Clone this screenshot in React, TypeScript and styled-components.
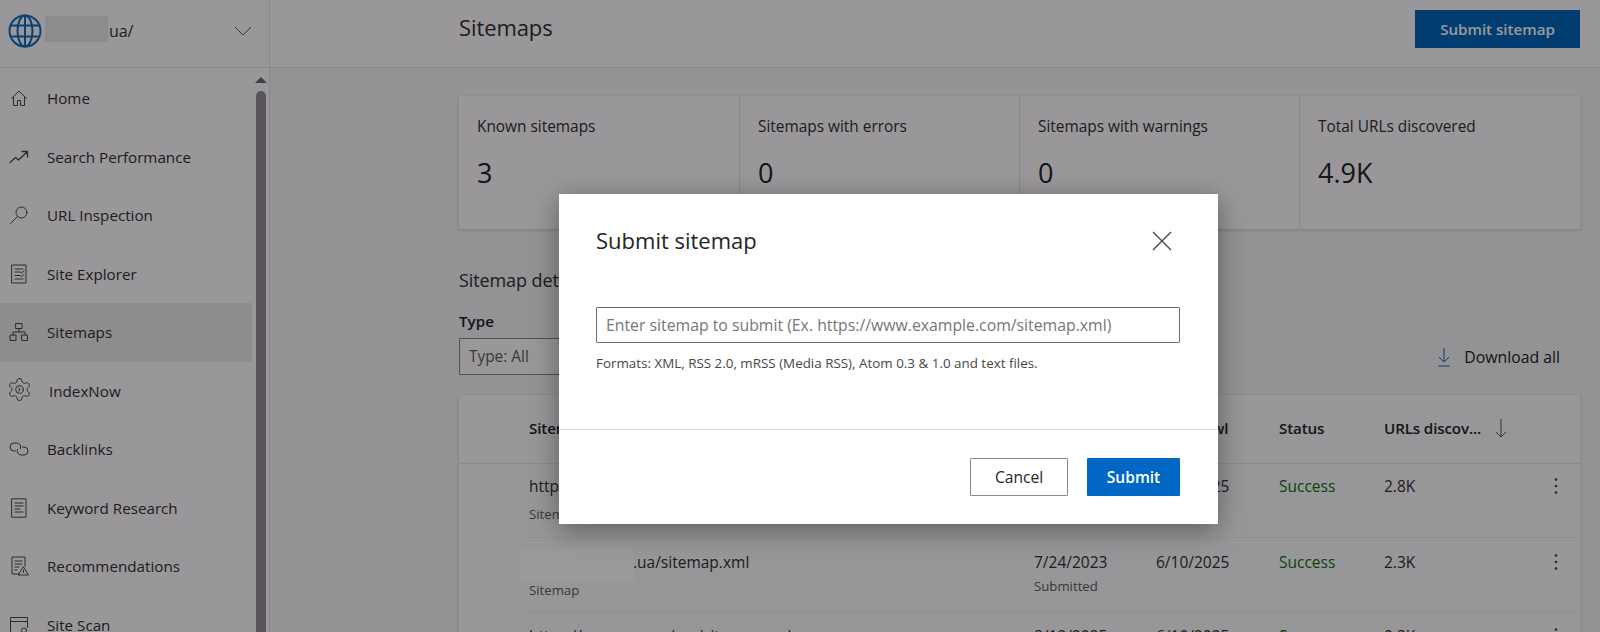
import React from "react";
import styled, { createGlobalStyle } from "styled-components";

const Global = createGlobalStyle`
  html, body { margin: 0; padding: 0; background: #f4f3f4; }
  * { box-sizing: border-box; }
  body { font-family: "Open Sans", "Noto Sans", "Liberation Sans", sans-serif; color: #242424; }
`;

const Shell = styled.div`
  position: relative;
  display: grid;
  grid-template-columns: 270px 1fr;
  width: 1600px;
  height: 632px;
  overflow: hidden;
  background: #f4f3f4;
`;

const Sidebar = styled.aside`
  display: flex;
  flex-direction: column;
  background: #fdfcfd;
  border-right: 1px solid #e4e2e4;
  min-height: 0;
`;

const SiteBar = styled.div`
  display: flex;
  align-items: center;
  height: 68px;
  flex: none;
  padding: 0 17px 6px 8px;
  border-bottom: 1px solid #e4e2e4;
`;

const SiteName = styled.span`
  position: relative;
  flex: 1;
  padding-left: 59px;
  margin-left: 4px;
  font-size: 16px;
  letter-spacing: -0.1px;
  color: #333;
`;

const Redaction = styled.span<{ $w: number; $h: number; $x: number; $y: number }>`
  position: absolute;
  left: ${(p) => p.$x}px;
  top: ${(p) => p.$y}px;
  width: ${(p) => p.$w}px;
  height: ${(p) => p.$h}px;
  background: #e8e8e8;
`;

const NavArea = styled.div`
  flex: 1;
  display: flex;
  min-height: 0;
  overflow: hidden;
`;

const NavList = styled.nav`
  width: 252px;
  flex: none;
  padding-top: 1px;
`;

const NavItem = styled.div<{ $active?: boolean; $indent?: number }>`
  display: flex;
  align-items: center;
  height: 58.5px;
  padding-left: 9px;
  background: ${(p) => (p.$active ? "#ece9e8" : "transparent")};
  font-size: 15.2px;
  color: #323130;

  span {
    margin-left: ${(p) => p.$indent ?? 18}px;
  }
`;

const ScrollTrack = styled.div`
  flex: 1;
  display: flex;
  flex-direction: column;
  align-items: center;
  padding-top: 9px;
`;

const ScrollArrow = styled.div`
  width: 0;
  height: 0;
  border-left: 6px solid transparent;
  border-right: 6px solid transparent;
  border-bottom: 6px solid #6d6b6f;
`;

const ScrollThumb = styled.div`
  width: 10px;
  flex: 1;
  margin-top: 8px;
  margin-bottom: -40px;
  border-radius: 5px 5px 0 0;
  background: #918d93;
`;

const Main = styled.main`
  display: flex;
  flex-direction: column;
  min-width: 0;
`;

const TopBar = styled.header`
  display: flex;
  align-items: center;
  justify-content: space-between;
  flex: none;
  height: 68px;
  padding: 0 20px 10px 189px;
  background: #fdfcfd;
  border-bottom: 1px solid #e4e2e4;
`;

const PageTitle = styled.h1`
  margin: -3px 0 0;
  font-size: 22px;
  font-weight: 400;
  letter-spacing: -0.1px;
  color: #323130;
`;

const PrimaryTop = styled.button`
  width: 165px;
  height: 38px;
  border: 0;
  background: #0067b8;
  color: #fff;
  font: 600 15.1px "Open Sans", sans-serif;
`;

const Content = styled.div`
  padding: 28px 20px 0 189px;
`;

const StatGrid = styled.section`
  display: grid;
  grid-template-columns: 280px 280px 280px 1fr;
  height: 133px;
  background: #fdfcfd;
  box-shadow: 0 1px 3px rgba(0, 0, 0, 0.16);
`;

const Stat = styled.div`
  padding: 21px 18px;
  & + & {
    border-left: 1px solid #e4e2e4;
  }
`;

const StatLabel = styled.div`
  font-size: 15.4px;
  line-height: 20px;
  color: #323130;
`;

const StatValue = styled.div`
  margin-top: 19px;
  font-size: 27px;
  line-height: 34px;
  color: #242424;
`;

const SectionTitle = styled.h2`
  margin: 39px 0 0;
  font-size: 18px;
  line-height: 24px;
  font-weight: 400;
  letter-spacing: -0.1px;
  color: #323130;
`;

const FilterRow = styled.div`
  display: flex;
  align-items: flex-end;
  justify-content: space-between;
  height: 62px;
  margin-top: 21px;
  padding-right: 20px;
`;

const FilterField = styled.div`
  display: flex;
  flex-direction: column;
`;

const FilterLabel = styled.label`
  font-size: 15.2px;
  font-weight: 600;
  line-height: 20px;
  margin-bottom: 7px;
`;

const SelectBox = styled.div`
  display: flex;
  align-items: center;
  width: 280px;
  height: 37px;
  padding-left: 9px;
  border: 1px solid #8a8886;
  border-radius: 1px;
  font-size: 15.4px;
  color: #605e5c;
  background: #fdfcfd;
`;

const DownloadLink = styled.div`
  display: flex;
  align-items: center;
  gap: 12px;
  margin-bottom: 7px;
  font-size: 15.8px;
  color: #242424;
`;

const TableCard = styled.section`
  margin-top: 20px;
  background: #fbfafb;
  box-shadow: 0 1px 3px rgba(0, 0, 0, 0.16);
`;

const columns = "505px 122px 123px 105px 1fr 24px";

const HeadRow = styled.div`
  display: grid;
  grid-template-columns: ${columns};
  align-items: center;
  height: 69px;
  padding: 0 12px 3px 70px;
  border-bottom: 1px solid #e6e4e6;
  font-size: 15.2px;
  font-weight: 600;
  letter-spacing: -0.15px;
  color: #242424;
`;

const SortHead = styled.div`
  display: flex;
  align-items: center;
  gap: 14px;
`;

const Row = styled.div<{ $height: number; $top: number }>`
  display: grid;
  grid-template-columns: ${columns};
  height: ${(p) => p.$height}px;
  margin-left: 68px;
  padding: ${(p) => p.$top}px 12px 0 2px;
  border-bottom: 1px solid #ecebec;
  font-size: 15.5px;
  line-height: 20px;
  color: #323130;
`;

const SubText = styled.div<{ $gap: number }>`
  margin-top: ${(p) => p.$gap}px;
  font-size: 13.2px;
  line-height: 16px;
  color: #605e5c;
`;

const UrlText = styled.div`
  position: relative;
`;

const MaskedPart = styled.span`
  padding-left: 104px;
`;

const RowRedaction = styled.span`
  position: absolute;
  left: -8px;
  top: -3px;
  width: 113px;
  height: 33px;
  background: #fff;
`;

const Status = styled.div`
  color: #0e700e;
`;

const Kebab = styled.div`
  display: flex;
  justify-content: center;
  height: 20px;
  align-items: center;
`;

const Overlay = styled.div`
  position: absolute;
  inset: 0;
  background: rgba(3, 0, 4, 0.4);
`;

const Modal = styled.div`
  position: absolute;
  left: 559px;
  top: 194px;
  width: 659px;
  height: 330px;
  display: flex;
  flex-direction: column;
  background: #fff;
  box-shadow: 0 6px 26px rgba(0, 0, 0, 0.38);
`;

const ModalHead = styled.div`
  display: flex;
  align-items: center;
  justify-content: space-between;
  height: 94px;
  padding: 0 46px 0 37px;
`;

const ModalTitle = styled.h3`
  margin: -3px 0 0;
  font-size: 22px;
  font-weight: 400;
  color: #242424;
`;

const ModalBody = styled.div`
  flex: 1;
  padding: 19px 38px 0 37px;
  border-bottom: 1px solid #dedede;
`;

const SitemapInput = styled.input`
  display: block;
  width: 100%;
  height: 36px;
  padding: 0 9px;
  border: 1px solid #6f6f6f;
  border-radius: 1px;
  outline: none;
  font: 400 15.8px "Open Sans", sans-serif;
  &::placeholder {
    color: #767676;
    opacity: 1;
  }
`;

const HelpText = styled.p`
  margin: 11px 0 0;
  font-size: 13.4px;
  line-height: 18px;
  color: #484644;
`;

const ModalFoot = styled.div`
  display: flex;
  justify-content: flex-end;
  gap: 19px;
  height: 94px;
  padding: 28px 38px 0 0;
`;

const ModalButton = styled.button<{ $primary?: boolean }>`
  height: 38px;
  width: ${(p) => (p.$primary ? 93 : 98)}px;
  border: ${(p) => (p.$primary ? "0" : "1px solid #8a8886")};
  border-radius: 1px;
  background: ${(p) => (p.$primary ? "#0067c5" : "#fff")};
  color: ${(p) => (p.$primary ? "#fff" : "#242424")};
  font: ${(p) => (p.$primary ? 600 : 400)} 15.6px "Open Sans", sans-serif;
`;

const Ico: React.FC<{ children: React.ReactNode }> = ({ children }) => (
  <svg width="20" height="20" viewBox="0 0 20 20" fill="none" stroke="#4a4848" strokeWidth="1" strokeLinecap="round" strokeLinejoin="round" style={{ flex: "none", overflow: "visible" }}>
    {children}
  </svg>
);

const icons = {
  home: <path d="M2.500 10.500 10 3l7.500 7.500M4.500 9v8.500h4V12.500h3v5h4V9" />,
  trend: <path strokeWidth="1.300" d="M1 15.500 6.500 10.500l3 2.500L18 5M13 4.500h5.500V10" />,
  search: (
    <>
      <circle cx="12.500" cy="7.500" r="5.500" />
      <path d="M8.500 11.500 1.500 18.500" />
    </>
  ),
  explorer: (
    <>
      <rect x="3" y="1" width="14" height="18" />
      <path d="M6 5h8M6 8h5l1.500 1L15 7M6 11.500h5l1.500 1 2.500-2M6 15h8" />
    </>
  ),
  tree: (
    <>
      <rect x="7" y="1.500" width="6" height="5" />
      <rect x="1.500" y="13" width="5.500" height="5.500" />
      <rect x="13" y="13" width="5.500" height="5.500" />
      <path d="M10 6.500V10M4 13v-3h12v3" />
    </>
  ),
  gear: (
    <g transform="translate(10.500 8.500) scale(1.100) translate(-12 -12)" strokeWidth="0.900">
      <path d="M12.220 2h-.44a2 2 0 0 0-2 2v.18a2 2 0 0 1-1 1.730l-.43.25a2 2 0 0 1-2 0l-.15-.08a2 2 0 0 0-2.730.73l-.22.38a2 2 0 0 0 .73 2.730l.15.1a2 2 0 0 1 1 1.720v.51a2 2 0 0 1-1 1.740l-.15.09a2 2 0 0 0-.73 2.730l.22.38a2 2 0 0 0 2.730.73l.15-.08a2 2 0 0 1 2 0l.43.25a2 2 0 0 1 1 1.730V20a2 2 0 0 0 2 2h.44a2 2 0 0 0 2-2v-.18a2 2 0 0 1 1-1.730l.43-.25a2 2 0 0 1 2 0l.15.08a2 2 0 0 0 2.730-.73l.22-.39a2 2 0 0 0-.73-2.730l-.15-.08a2 2 0 0 1-1-1.740v-.5a2 2 0 0 1 1-1.740l.15-.09a2 2 0 0 0 .73-2.730l-.22-.38a2 2 0 0 0-2.730-.73l-.15.08a2 2 0 0 1-2 0l-.43-.25a2 2 0 0 1-1-1.730V4a2 2 0 0 0-2-2z" />
      <circle cx="12" cy="12" r="3.500" />
      <path d="M11 10.500 12.800 12 11 13.500" />
    </g>
  ),
  link: (
    <>
      <path d="M11.500 9.500A4 4 0 0 0 8 4H5a4 4 0 0 0 0 8h1.500" />
      <path d="M8.500 10.500A4 4 0 0 0 12 16h3a4 4 0 0 0 0-8h-1.500" />
    </>
  ),
  doc: (
    <>
      <rect x="3" y="0.800" width="14" height="18.400" />
      <path d="M6 5h8M6 8h8M6 11h5M6 14h8" />
    </>
  ),
  rec: (
    <>
      <path d="M10 18H3V1h13v9" />
      <path d="M6 5h7M6 8h7M6 11h4M6 14h2M14.500 11 19.500 19h-10zM14.500 14v2.500" />
    </>
  ),
  scan: (
    <>
      <path d="M10 17.500H1.500v-15h17v10M1.500 6.500h17" />
      <circle cx="15" cy="15.500" r="2.500" />
      <path d="M13 17.500l-2 2" />
    </>
  ),
};

const navItems: { label: string; icon: keyof typeof icons; active?: boolean; indent?: number }[] = [
  { label: "Home", icon: "home" },
  { label: "Search Performance", icon: "trend" },
  { label: "URL Inspection", icon: "search" },
  { label: "Site Explorer", icon: "explorer" },
  { label: "Sitemaps", icon: "tree", active: true },
  { label: "IndexNow", icon: "gear", indent: 20 },
  { label: "Backlinks", icon: "link" },
  { label: "Keyword Research", icon: "doc" },
  { label: "Recommendations", icon: "rec" },
  { label: "Site Scan", icon: "scan" },
];

const stats = [
  ["Known sitemaps", "3"],
  ["Sitemaps with errors", "0"],
  ["Sitemaps with warnings", "0"],
  ["Total URLs discovered", "4.9K"],
];

const Dots = () => (
  <svg width="4" height="18" viewBox="0 0 4 18" fill="#444">
    <circle cx="2" cy="2.500" r="1.300" />
    <circle cx="2" cy="9" r="1.300" />
    <circle cx="2" cy="15.500" r="1.300" />
  </svg>
);

export default function App() {
  return (
    <Shell>
      <Global />
      <Sidebar>
        <SiteBar>
          <svg width="34" height="34" viewBox="0 0 34 34" fill="none" stroke="#0f6cbd" strokeWidth="2">
            <circle cx="17" cy="17" r="15.500" />
            <ellipse cx="17" cy="17" rx="7.500" ry="15.500" />
            <path d="M17 1.500v31M3 11.500h28M3 22.500h28" />
          </svg>
          <SiteName>
            <Redaction $x={-1} $y={-4} $w={63} $h={26} />
            .ua/
          </SiteName>
          <svg width="18" height="10" viewBox="0 0 18 10" fill="none" stroke="#555" strokeWidth="1">
            <path d="M1 1l8 8 8-8" />
          </svg>
        </SiteBar>
        <NavArea>
          <NavList>
            {navItems.map((n) => (
              <NavItem key={n.label} $active={n.active} $indent={n.indent}>
                <Ico>{icons[n.icon]}</Ico>
                <span>{n.label}</span>
              </NavItem>
            ))}
          </NavList>
          <ScrollTrack>
            <ScrollArrow />
            <ScrollThumb />
          </ScrollTrack>
        </NavArea>
      </Sidebar>
      <Main>
        <TopBar>
          <PageTitle>Sitemaps</PageTitle>
          <PrimaryTop>Submit sitemap</PrimaryTop>
        </TopBar>
        <Content>
          <StatGrid>
            {stats.map(([label, value]) => (
              <Stat key={label}>
                <StatLabel>{label}</StatLabel>
                <StatValue>{value}</StatValue>
              </Stat>
            ))}
          </StatGrid>
          <SectionTitle>Sitemap details</SectionTitle>
          <FilterRow>
            <FilterField>
              <FilterLabel>Type</FilterLabel>
              <SelectBox>Type: All</SelectBox>
            </FilterField>
            <DownloadLink>
              <svg width="16" height="20" viewBox="0 0 16 20" fill="none" stroke="#0f6cbd" strokeWidth="1">
                <path d="M8 1v14M3 10l5 5 5-5M2 19h12" />
              </svg>
              Download all
            </DownloadLink>
          </FilterRow>
          <TableCard>
            <HeadRow>
              <div>Sitemap</div>
              <div>Submitted</div>
              <div>Last crawl</div>
              <div>Status</div>
              <SortHead>
                URLs discov...
                <svg width="12" height="20" viewBox="0 0 12 20" fill="none" stroke="#555" strokeWidth="1">
                  <path d="M6 1v18M1 14l5 5 5-5" />
                </svg>
              </SortHead>
              <div />
            </HeadRow>
            <Row $height={74} $top={12}>
              <div>
                <UrlText>https://www.example.ua/sitemap_index.xml</UrlText>
                <SubText $gap={10}>Sitemap index</SubText>
              </div>
              <div>
                7/24/2023
                <SubText $gap={6}>Submitted</SubText>
              </div>
              <div>6/10/2025</div>
              <Status>Success</Status>
              <div>2.8K</div>
              <Kebab><Dots /></Kebab>
            </Row>
            <Row $height={75} $top={14}>
              <div>
                <UrlText>
                  <RowRedaction />
                  <MaskedPart>.ua/sitemap.xml</MaskedPart>
                </UrlText>
                <SubText $gap={10}>Sitemap</SubText>
              </div>
              <div>
                7/24/2023
                <SubText $gap={6}>Submitted</SubText>
              </div>
              <div>6/10/2025</div>
              <Status>Success</Status>
              <div>2.3K</div>
              <Kebab><Dots /></Kebab>
            </Row>
            <Row $height={75} $top={13}>
              <div>
                <UrlText>https://www.exampl.ua/sitemap.xml</UrlText>
              </div>
              <div>8/12/2025</div>
              <div>6/10/2025</div>
              <Status>Success</Status>
              <div>0.3K</div>
              <Kebab><Dots /></Kebab>
            </Row>
          </TableCard>
        </Content>
      </Main>
      <Overlay />
      <Modal>
        <ModalHead>
          <ModalTitle>Submit sitemap</ModalTitle>
          <svg width="20" height="20" viewBox="0 0 20 20" fill="none" stroke="#444" strokeWidth="1.300">
            <path d="M1 1l18 18M19 1 1 19" />
          </svg>
        </ModalHead>
        <ModalBody>
          <SitemapInput placeholder="Enter sitemap to submit (Ex. https://www.example.com/sitemap.xml)" />
          <HelpText>Formats: XML, RSS 2.0, mRSS (Media RSS), Atom 0.3 &amp; 1.0 and text files.</HelpText>
        </ModalBody>
        <ModalFoot>
          <ModalButton>Cancel</ModalButton>
          <ModalButton $primary>Submit</ModalButton>
        </ModalFoot>
      </Modal>
    </Shell>
  );
}
